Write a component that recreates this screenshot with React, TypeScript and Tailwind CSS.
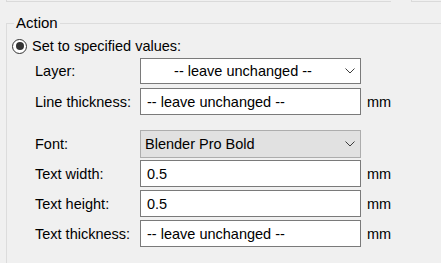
import React from "react";

const rows = [
  { label: "Text width:", value: "0.5" },
  { label: "Text height:", value: "0.5" },
  { label: "Text thickness:", value: "-- leave unchanged --" },
];

function Chevron() {
  return (
    <svg width="10" height="6" viewBox="0 0 10 6" className="shrink-0">
      <polyline points="0.5,0.5 5,5 9.5,0.5" fill="none" stroke="#3c3c3c" strokeWidth="1" />
    </svg>
  );
}

function Row({ label, children, unit }: { label: string; children: React.ReactNode; unit?: boolean }) {
  return (
    <div className="flex items-center">
      <div className="w-[105px] shrink-0">{label}</div>
      {children}
      {unit && <span className="ml-[6px]">mm</span>}
    </div>
  );
}

function TextBox({ value }: { value: string }) {
  return (
    <div className="w-[221px] h-[27px] bg-white border border-[#7a7a7a] flex items-center pl-[6px]">
      {value}
    </div>
  );
}

export default function App() {
  return (
    <div
      className="w-[441px] h-[263px] bg-[#f0f0f0] overflow-hidden text-[14.5px] text-black leading-[20px]"
      style={{ fontFamily: '"Liberation Sans", Arial, sans-serif' }}
    >
      <div className="flex h-[2px]">
        <div className="ml-[6px] w-[385px] border-l border-b border-[#dadada]" />
        <div className="ml-[20px] flex-1 border-l border-b border-[#dadada]" />
      </div>

      <fieldset className="mt-[11px] ml-[6px] border-t border-l border-[#dcdcdc] h-[250px]">
        <legend className="ml-[7px] px-[2px] text-[15px]">Action</legend>

        <div className="flex items-center pl-[5px] mt-[3px]">
          <div className="w-[15px] h-[15px] rounded-full border border-[#333] bg-white flex items-center justify-center">
            <div className="w-[8px] h-[8px] rounded-full bg-[#333]" />
          </div>
          <span className="ml-[5px]">Set to specified values:</span>
        </div>

        <div className="pl-[28px] flex flex-col">
          <div className="mt-[2px]">
            <Row label="Layer:">
              <div className="w-[221px] h-[26px] bg-white border border-[#7a7a7a] flex items-center pr-[5px]">
                <span className="flex-1 text-center">-- leave unchanged --</span>
                <Chevron />
              </div>
            </Row>
          </div>
          <div className="mt-[4px]">
            <Row label="Line thickness:" unit>
              <TextBox value="-- leave unchanged --" />
            </Row>
          </div>
          <div className="mt-[15px]">
            <Row label="Font:">
              <div className="w-[221px] h-[28px] bg-[#e1e1e1] border border-[#adadad] flex items-center pl-[4px] pr-[5px]">
                <span className="flex-1">Blender Pro Bold</span>
                <Chevron />
              </div>
            </Row>
          </div>
          <div className="flex flex-col gap-[3px] mt-[2px]">
            {rows.map((r) => (
              <Row key={r.label} label={r.label} unit>
                <TextBox value={r.value} />
              </Row>
            ))}
          </div>
        </div>
      </fieldset>
    </div>
  );
}
